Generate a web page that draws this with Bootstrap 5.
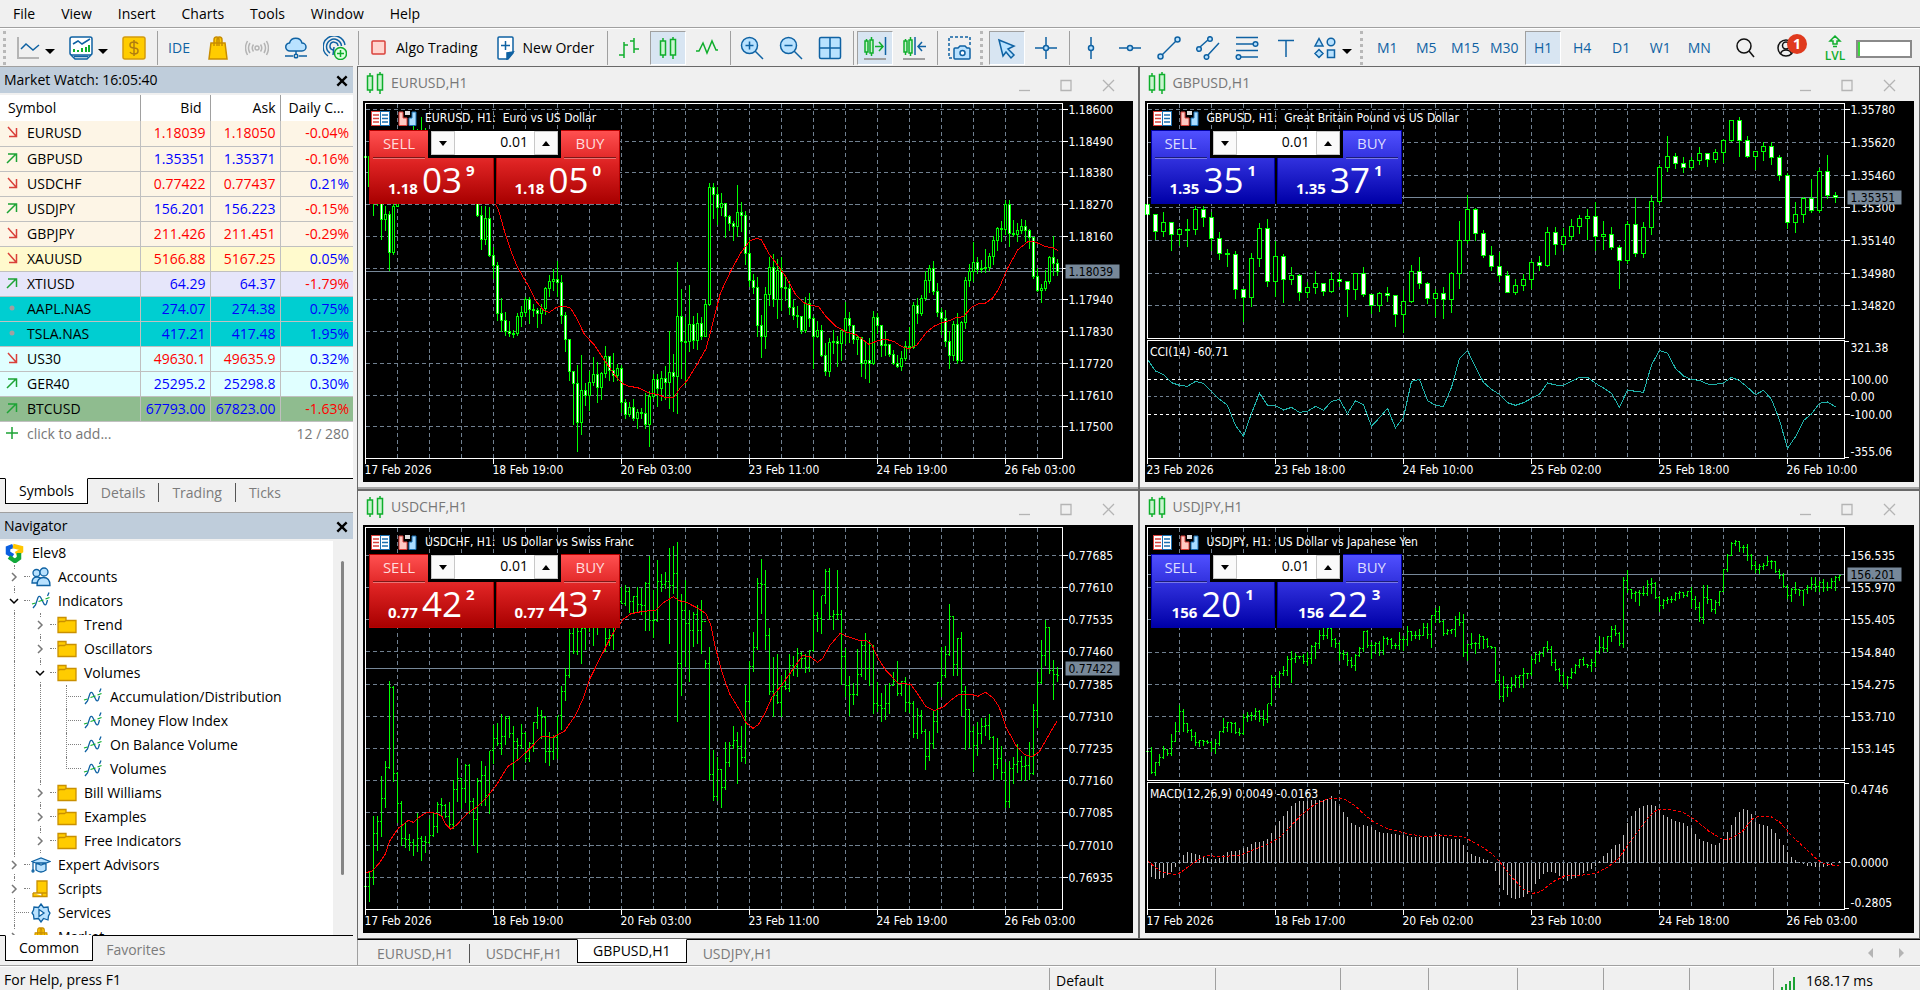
<!DOCTYPE html>
<html lang="en">
<head>
<meta charset="utf-8">
<meta name="viewport" content="width=device-width, initial-scale=1">
<title>Trading terminal</title>
<link rel="stylesheet" href="https://cdn.jsdelivr.net/npm/bootstrap@5.3.0/dist/css/bootstrap.min.css">
<style>
:root{--face:#f0f0f0;--line:#a0a0a0;--dark:#696969;--blue:#0f62a3;--green:#0fae2c}
body{font-family:"Open Sans","Noto Sans",sans-serif;font-size:14px;line-height:20px;color:#000;background:var(--face)}
a{color:inherit;text-decoration:none}
button{background:none;border:0;padding:0;color:inherit}
svg.ico{width:24px;height:24px;fill:none;stroke:var(--blue);stroke-width:1.5;flex:none}
/* menu and toolbar */
.menubar{height:28px;border-bottom:1px solid var(--line);padding-top:1px}
.menubar a{padding:0 13px}
.toolbar{height:38px;gap:3px;padding:2px 8px 0 3px;border-top:1px solid #fff}
.tool{width:36px;height:34px;display:flex;align-items:center;justify-content:center;color:var(--blue);flex:none;border:1px solid transparent}
.tool.active{background:#d8e5f2;border-color:var(--line) #fff #fff var(--line)}
.tool.drop{width:50px;justify-content:flex-start;padding-left:5px}
.tool.drop::after{content:"";border:5px solid transparent;border-top-color:#000;border-bottom:0;margin:6px 0 0 5px}
.tool.wide{width:auto;color:#000;gap:5px;padding:0 7px 0 4px}
.divide{width:3px;height:34px;flex:none;border-right:1px solid var(--line)}
.grip{width:6px;height:34px;flex:none;border-left:3px dotted #b8b8b8}
.meter{width:56px;height:18px;flex:none;border:2px solid #8a8a8a;background:#fff;border-radius:0}
.meter .progress-bar{background:#3fd63f;width:4%}
.alert-dot{top:2px;left:20px;width:20px;height:20px;line-height:20px;background:#e03a1e;color:#fff;border-radius:50%;font-weight:700}
/* docked panels */
.side{width:353px;flex:none;margin-right:4px}
.panel-head{height:27px;background:#bfcddb;border-top:1px solid var(--line);padding:0 4px;margin-bottom:2px;flex:none}
.quotes{table-layout:fixed;width:100%;background:#fff;border-collapse:collapse}
.quotes th{font-weight:400;height:26px;border-left:1px solid var(--line);padding:0 8px}
.quotes td{height:25px;border:1px solid #c0c0c0;border-width:0 0 1px 1px;padding:0 4px 0 4px;text-align:right}
.quotes th:first-child,.quotes td:first-child{border-left:0;text-align:left}
.quotes td:first-child{padding-left:6px}
.quotes td:first-child svg{width:12px;height:12px;margin-right:9px;fill:none;stroke-width:1.5;vertical-align:0}
.quotes .up{color:#00f}.quotes .dn{color:#f00}
.c-fx td{background:#fdf5e6}.c-xau td{background:#fffacd}.c-oil td{background:#e6e6fa}
.c-stk td{background:#00ced1}.c-idx td{background:#e0ffff}.c-btc td{background:#8fbc8f}
.quotes .adder td{border-color:transparent;border-left:0;color:#777}
.tabrow{display:flex;border-top:1px solid #000;padding-left:5px;height:34px;color:#7b7b7b;flex:none}
.tabrow button{padding:0 13px;height:19px;line-height:15px;margin-top:4px;border-right:1px solid #555}
.tabrow button.on{background:#fff;color:#000;height:26px;margin-top:-1px;border:1px solid #000;border-top-color:#fff;line-height:22px}
.tabrow button.last{border:0}
.tree{background:#fff;min-height:0}
.tree ul{list-style:none;margin:0;padding:0 0 0 1px;width:333px}
.tree li{height:24px;display:flex;align-items:center;line-height:24px}
.tree svg.ico{width:20px;height:20px;margin:0 7px 0 4px;stroke-width:1.3}
.cellg{width:26px;height:24px;position:relative;flex:none;display:flex;align-items:center;justify-content:center}
.cellg.v::before{content:"";position:absolute;left:13px;top:0;bottom:0;border-left:1px dotted #808080}
.cellg.half::before{bottom:12px}
.cellg.h::after{content:"";position:absolute;left:23px;top:11px;width:6px;border-top:1px dotted #808080}
.cellg.e::after{left:13px;width:15px}
.cellg svg{position:relative;background:#fff;width:10px;height:16px;fill:none;stroke:#777;stroke-width:1.5}
.track{width:20px;background:var(--face);padding:20px 9px 60px 8px}
.track div{background:#858585;border-radius:2px}
/* chart windows */
.mdi{display:grid;grid-template-columns:1fr 1fr;grid-template-rows:424fr 449fr;min-height:0}
.win{border:1px solid var(--dark);padding:0 5px 5px;display:flex;flex-direction:column;min-height:0;min-width:0}
.win:nth-child(-n+2){box-shadow:inset 0 -2px #a8a8a8;padding-bottom:7px}
.win-head{height:34px;color:#777;flex:none;padding-bottom:2px}
.win-head .ctl{gap:28px;padding-right:18px;padding-top:2px}
.win-head .ctl svg{width:14px;height:14px;fill:none;stroke:#b4b4b4;stroke-width:1.3}
.canvas{background:#000;min-height:0}
.canvas svg.plot{position:absolute;inset:0;width:100%;height:100%;font:12px "DejaVu Sans Condensed","DejaVu Sans",sans-serif;fill:#fff}
.caption{top:8px;left:8px;gap:8px;color:#fff;font:12px/18px "DejaVu Sans Condensed","DejaVu Sans",sans-serif;white-space:pre}
.caption svg{width:19px;height:15px}
.deal{top:29px;left:6px;width:251px;height:74px;gap:2px;background:#000}
.deal .side-btn{flex:1;position:relative;color:#fff;border:1px solid #b80000;background:linear-gradient(#ff5050,#d22 45%,#a80000)}
.blue .side-btn{border-color:#0000a8;background:linear-gradient(#5050ff,#2c2cd8 45%,#0000a8)}
.word{position:absolute;top:2px;left:3px;width:52px;height:25px;font-size:15px;line-height:20px;color:#ffdcdc;border-bottom:1px solid rgba(0,0,0,.45);box-shadow:0 1px rgba(255,255,255,.35)}
.blue .word{color:#dcdcff}
.buy .word{left:auto;right:3px}
.price{position:absolute;bottom:2px;left:0;right:0;height:44px;display:flex;align-items:flex-end;justify-content:center;gap:4px;padding-bottom:4px}
.price b{font-size:15px;line-height:16px;margin-bottom:1px}
.price i{font:normal 35px/34px "Open Sans","Noto Sans",sans-serif}
.price sup{font-size:15px;font-weight:700;line-height:16px;top:0;margin-bottom:19px}
.lot{top:0;left:59px;width:133px;height:28px;background:#000;padding:1px 3px 3px}
.lot button{width:24px;background:#fafafa;border:1px solid #c8c8c8;display:flex;align-items:center;justify-content:center}
.lot input{min-width:0;flex:1;border:0;text-align:right;padding:0 6px 2px;font-size:14px;color:#000;background:#fff}
.lot svg{width:8px;height:5px}
.doc-tabs{height:26px;border-left:1px solid var(--line);padding-left:3px}
.doc-tabs button{padding:0 15px 0 16px;line-height:16px}
.doc-tabs button.on{height:24px;padding:0 15px}
.status{height:25px;border-top:1px solid var(--line);box-shadow:inset 0 1px #fff;flex:none}
.status span{border-left:1px solid var(--line);padding:3px 6px 0;margin-top:2px;flex:none}
</style>
</head>
<body>
<svg width="0" height="0" class="position-absolute" aria-hidden="true">
<symbol id="i-line" viewBox="0 0 24 24"><path stroke="#b4b4b4" stroke-width="2" d="M2 1v21h21"/><path d="M5 13l5-5 7 6 6-5"/></symbol>
<symbol id="i-tpl" viewBox="0 0 24 24"><path fill="#fff" d="M3 1h18q2 0 2 2v14q0 2-2 2H3q-2 0-2-2V3q0-2 2-2z"/><path d="M4 8l5-3 4 3 8-5" /><path stroke="#0fae2c" stroke-width="2" stroke-dasharray="none" d="M5 16v-3M9 16v-2M13 16v-4M17 16v-5M20 16v-7"/><path d="M2 19l4 4h12l4-4M5 20.500h14"/></symbol>
<symbol id="i-usd" viewBox="0 0 24 24"><rect x="1" y="1" width="22" height="22" rx="2" fill="#ffcc00" stroke="#d39b0c"/><path stroke="#b07c10" d="M16 8q-1-2-4-2-4 0-4 3t4 3 4 3-4 3q-3 0-4-2M12 4v16"/></symbol>
<symbol id="i-bag" viewBox="0 0 24 24"><path fill="#ffcc00" stroke="#c98d00" d="M5 7h14l2 16H3zM8 10V4q0-3 2.500-3T13 4v6M11 10V4q0-3 2.500-3T16 4v6"/></symbol>
<symbol id="i-sig" viewBox="0 0 24 24"><g stroke="#b4b4b4"><circle cx="12" cy="12" r="2"/><path d="M8.500 8.500q-2.500 3.500 0 7M15.500 8.500q2.500 3.500 0 7M5 7q-3 5 0 10M19 7q3 5 0 10M2.500 5q-4 7 0 14M21.500 5q4 7 0 14"/></g></symbol>
<symbol id="i-cloud" viewBox="0 0 24 24"><path fill="#b9e2ff" d="M6 15a4 4 0 0 1-.5-8A6.500 6.500 0 0 1 18 7a4 4 0 0 1 0 8z"/><path d="M12 15v4M1 20h8M15 20h8"/><circle cx="12" cy="20" r="1.800"/></symbol>
<symbol id="i-vps" viewBox="0 0 24 24"><path d="M5 20A11 11 0 1 1 22 9M7 17A7.500 7.500 0 1 1 18.500 10M10 14a4 4 0 1 1 5-4M11 11l-1 8"/><circle cx="17.500" cy="17.500" r="6" fill="#dfffe0" stroke="#0fae2c"/><path stroke="#0fae2c" d="M17.500 14v7M14 17.500h7"/></symbol>
<symbol id="i-algo" viewBox="0 0 24 24"><rect x="5" y="5" width="13" height="13" rx="1" fill="#ffd6d0" stroke="#d9403a"/></symbol>
<symbol id="i-order" viewBox="0 0 24 24"><path fill="#fff" d="M5 1h13q1 0 1 1v15l-5 6H5q-1 0-1-1V2q0-1 1-1z"/><path fill="#0f62a3" d="M19 16l-6 7v-6z"/><path d="M11.500 5v9M7 9.500h9"/></symbol>
<symbol id="i-bars" viewBox="0 0 24 24"><path stroke="#0fae2c" d="M7 6v16M2 19h5M7 9h4M17 2v15M13 5h4M17 13h5"/></symbol>
<symbol id="i-candle" viewBox="0 0 24 24"><path stroke="#0fae2c" d="M7 2v3M7 19v3M17 1v2M17 19v4"/><path stroke="#0fae2c" fill="#c9f5cf" d="M4.500 5h5v14h-5zM14.500 3.500h5v15.500h-5z"/></symbol>
<symbol id="i-zig" viewBox="0 0 24 24"><path stroke="#0fae2c" d="M1 15h3l4-8 4 10 5-12 4 9h2"/></symbol>
<symbol id="i-zin" viewBox="0 0 24 24"><circle cx="9.500" cy="9.500" r="8" fill="#b9e2ff"/><path d="M15 15l8 8M9.500 5.500v8M5.500 9.500h8"/></symbol>
<symbol id="i-zout" viewBox="0 0 24 24"><circle cx="9.500" cy="9.500" r="8" fill="#b9e2ff"/><path d="M15 15l8 8M5.500 9.500h8"/></symbol>
<symbol id="i-tile" viewBox="0 0 24 24"><path fill="#b9e2ff" d="M3 1.500h18q1.500 0 1.500 1.500v18q0 1.500-1.500 1.500H3q-1.500 0-1.500-1.500V3q0-1.500 1.500-1.500zM12 1.500v21M1.500 12h21"/></symbol>
<symbol id="i-scroll" viewBox="0 0 24 24"><path stroke="#0fae2c" fill="#c9f5cf" d="M2 5h3v11H2zM7 4h3v13H7zM3.500 3v2M3.500 16v3M8.500 1v3M8.500 17v3"/><path stroke="#0fae2c" d="M12 10.500h8M16 6l4 4.500-4 4.500"/><path d="M22.500 1v18"/><path stroke="#a0a0a0" stroke-width="2" d="M1 23h22"/></symbol>
<symbol id="i-shift" viewBox="0 0 24 24"><path stroke="#0fae2c" fill="#c9f5cf" d="M2 5h3v11H2zM7 4h3v13H7zM3.500 3v2M3.500 16v3M8.500 1v3M8.500 17v3"/><path d="M13 1v18M24 10.500h-8M20 6l-4 4.500 4 4.500"/><path stroke="#a0a0a0" stroke-width="2" d="M1 23h22"/></symbol>
<symbol id="i-cam" viewBox="0 0 24 24"><path stroke-dasharray="3 2" d="M5 22H2V1h21v8"/><path fill="#b9e2ff" d="M8 12h3l2-2h5l2 2h2q1 0 1 1v9q0 1-1 1H8q-1 0-1-1v-9q0-1 1-1z"/><circle cx="15.500" cy="17" r="2.500" fill="#fff"/></symbol>
<symbol id="i-cur" viewBox="0 0 24 24"><path fill="#b9e2ff" d="M4 4l15 6-6 3 6 6-3 3-5-6-3 4z"/></symbol>
<symbol id="i-cross" viewBox="0 0 24 24"><path d="M12 1v8M12 15v8M1 12h8M15 12h8"/><circle cx="12" cy="12" r="2.500" fill="#b9e2ff"/></symbol>
<symbol id="i-vl" viewBox="0 0 24 24"><path d="M12 1v8M12 15v8"/><circle cx="12" cy="12" r="2.500" fill="#b9e2ff"/></symbol>
<symbol id="i-hl" viewBox="0 0 24 24"><path d="M1 12h8M15 12h8"/><circle cx="12" cy="12" r="2.500" fill="#b9e2ff"/></symbol>
<symbol id="i-trend" viewBox="0 0 24 24"><path d="M5 19L19 5"/><circle cx="3.500" cy="20.500" r="2.500" fill="#b9e2ff"/><circle cx="20.500" cy="3.500" r="2.500" fill="#b9e2ff"/></symbol>
<symbol id="i-chan" viewBox="0 0 24 24"><path d="M4 11l9-8M12 19L23 7"/><g fill="#b9e2ff"><circle cx="14" cy="3" r="2.300"/><circle cx="3" cy="13" r="2.300"/><circle cx="10.500" cy="21" r="2.300"/></g></symbol>
<symbol id="i-fib" viewBox="0 0 24 24"><path d="M1 1.500h22M1 8h17M1 14.500h22M6 21h17"/><g fill="#b9e2ff"><circle cx="20.500" cy="8" r="2.300"/><circle cx="3.500" cy="21" r="2.300"/></g></symbol>
<symbol id="i-text" viewBox="0 0 24 24"><path d="M4 4.500h16M12 4.500V21"/></symbol>
<symbol id="i-shapes" viewBox="0 0 24 24"><g fill="#b9e2ff"><path d="M6 2.500l4 7.500H2zM6 13.500l4 4-4 4-4-4zM14.500 14h7v7.500h-7z"/><circle cx="18" cy="6" r="3.800"/></g></symbol>
<symbol id="i-find" viewBox="0 0 24 24"><g stroke="#111"><circle cx="11" cy="10" r="7"/><path d="M16 15l5 6"/></g></symbol>
<symbol id="i-user" viewBox="0 0 24 24"><g stroke="#111"><circle cx="12" cy="12" r="8"/><circle cx="12" cy="9.500" r="3.500"/><path d="M6.500 18q1-4 5.500-4t5.500 4"/></g></symbol>
<symbol id="i-lvl" viewBox="0 0 24 16"><path stroke="#0fae2c" d="M12 2l5 5h-3v3h-4V7H7zM10 12.500h4"/></symbol>
<symbol id="i-up" viewBox="0 0 12 12"><path stroke="#1da335" d="M1 11L10 2M2 2h8.500v8"/></symbol>
<symbol id="i-dn" viewBox="0 0 12 12"><path stroke="#d9403a" d="M2 1l8 9M10.500 2v8.500H3"/></symbol>
<symbol id="i-dot" viewBox="0 0 12 12"><circle cx="6" cy="6" r="2.500" fill="#a0a0a0"/></symbol>
<symbol id="i-plus" viewBox="0 0 12 12"><path stroke="#1da335" d="M6 0v12M0 6h12"/></symbol>
<symbol id="i-x" viewBox="0 0 12 12"><path stroke="#000" stroke-width="2" d="M2 2l8 8M10 2l-8 8"/></symbol>
<symbol id="i-r" viewBox="0 0 10 16"><path d="M3 4l4 4-4 4"/></symbol>
<symbol id="i-d" viewBox="0 0 10 16"><path stroke="#000" d="M1 6l4 4 4-4"/></symbol>
<symbol id="i-fold" viewBox="0 0 20 20"><path fill="#ffcc00" stroke="#c99000" d="M1 2.500h8v3h10v12H1zM1 8l1.500-1.500h5L9 5.500"/></symbol>
<symbol id="i-fx" viewBox="0 0 20 20"><path d="M2 17l2.500-3 2.500-7.500Q8.500 4 10 7l3 6q1.500 2 2.500-.5l1-3.500M16.500 5l1.500-3.500"/><path stroke="#0fae2c" d="M1 13l3.500-1M7.500 10.500l5-1.500M14.500 8l4-1.500"/></symbol>
<symbol id="i-acc" viewBox="0 0 20 20"><g fill="#b9e2ff"><circle cx="5.500" cy="6" r="3.500"/><path d="M1 16q0-6 5-6t5 6z"/><circle cx="13" cy="5" r="4"/><path d="M6 18.500q0-8 6.500-8t6.500 8z"/></g></symbol>
<symbol id="i-exp" viewBox="0 0 20 20"><path fill="#b9e2ff" d="M5 8v7q5 4 10 0V8zM1 6.500L10 3l9 3.500L10 10zM2 7v8"/><circle cx="2" cy="16" r="1"/></symbol>
<symbol id="i-scr" viewBox="0 0 20 20"><path fill="#ffcc00" stroke="#c99000" d="M6 2h10v12H6zM2 14h9v3.500h5V14M2 14v3.500h11"/></symbol>
<symbol id="i-srv" viewBox="0 0 20 20"><path fill="#b9e2ff" d="M10 1l2.500 3.500L17 4l.5 4L19 10l-1.500 3-.5 4-4.500-1.500L10 19l-2.500-3.500L3 16l-.5-4L1 10l1.500-3L3 4l4.500.5z"/><path d="M8 6.500l5 3.500-5 3.500z" fill="#fff"/></symbol>
<symbol id="i-logo" viewBox="0 0 20 20"><g stroke-width="4.500"><path stroke="#0a5fe0" d="M8 3L3 5v5l5 3"/><path stroke="#ffc600" d="M8 3l8 2v3l-5 3"/><path stroke="#12a83a" d="M4 14l6 4 4-3v-5"/></g></symbol>
<symbol id="i-dom" viewBox="0 0 19 15"><rect x=".5" y=".5" width="9" height="14" fill="#fff" stroke="#d9403a"/><rect x="9.500" y=".5" width="9" height="14" fill="#fff" stroke="#1a6fb0"/><path stroke="#d9403a" stroke-width="1.500" d="M2 4h6M2 7.500h6M2 11h6"/><path stroke="#1a6fb0" stroke-width="1.500" d="M11 4h6M11 7.500h6M11 11h6"/></symbol>
<symbol id="i-one" viewBox="0 0 19 15"><path fill="#ffc9c2" stroke="#d9403a" d="M1 1h4v6h4v7.500H1z"/><path fill="#a9dcff" stroke="#1a6fb0" d="M18 1h-4v6h-3v7.500h7z"/><path fill="#ddd" d="M7 0h5v4H7z"/></symbol>
</svg>

<div class="vh-100 d-flex flex-column overflow-hidden">
<nav class="menubar d-flex align-items-center flex-shrink-0" aria-label="Main menu">
<a href="#">File</a><a href="#">View</a><a href="#">Insert</a><a href="#">Charts</a><a href="#">Tools</a><a href="#">Window</a><a href="#">Help</a>
</nav>
<div class="toolbar d-flex flex-shrink-0" id="toolbar" role="toolbar" aria-label="Toolbar"></div>

<div class="d-flex flex-grow-1" style="min-height:0">
<aside class="side d-flex flex-column">
<section>
<div class="panel-head d-flex justify-content-between align-items-center"><span>Market Watch: 16:05:40</span><button aria-label="Close Market Watch"><svg width="14" height="14"><use href="#i-x"/></svg></button></div>
<div class="bg-white">
<table class="quotes mb-0"><colgroup><col style="width:140px"><col style="width:70px"><col style="width:70px"><col></colgroup>
<thead><tr><th>Symbol</th><th class="text-end">Bid</th><th class="text-end px-1">Ask</th><th>Daily C...</th></tr></thead><tbody id="quotes"></tbody></table>
<div style="height:31px"></div></div>
<div class="tabrow"><button class="on">Symbols</button><button>Details</button><button>Trading</button><button class="last">Ticks</button></div>
</section>
<section class="d-flex flex-column flex-grow-1" style="min-height:0">
<div class="panel-head d-flex justify-content-between align-items-center"><span>Navigator</span><button aria-label="Close Navigator"><svg width="14" height="14"><use href="#i-x"/></svg></button></div>
<div class="tree d-flex flex-grow-1 overflow-hidden"><ul id="tree" class="flex-grow-1"></ul><div class="track flex-shrink-0 d-flex"><div class="flex-grow-1"></div></div></div>
<div class="tabrow" style="height:30px"><button class="on">Common</button><button class="last">Favorites</button></div>
</section>
</aside>
<main class="flex-grow-1 d-flex flex-column" style="min-width:0">
<div class="mdi flex-grow-1" id="mdi"></div>
<div class="tabrow doc-tabs"><button>EURUSD,H1</button><button class="last">USDCHF,H1</button><button class="on">GBPUSD,H1</button><button class="last">USDJPY,H1</button>
<span class="ms-auto d-flex align-items-center gap-4 pe-3"><svg width="6" height="10"><path fill="#b4b4b4" d="M5 0v10L0 5z"/></svg><svg width="6" height="10"><path fill="#b4b4b4" d="M1 0v10l5-5z"/></svg></span></div>
</main>
</div>
<footer class="status d-flex">
<div class="flex-grow-1 ps-1 pt-1">For Help, press F1</div>
<span style="width:166px">Default</span><span style="width:125px"></span><span style="width:88px"></span><span style="width:89px"></span><span style="width:86px"></span><span style="width:86px"></span><span style="width:84px"></span>
<span style="width:147px" class="d-flex gap-2"><svg width="18" height="16" class="mt-1"><path stroke="#1da335" stroke-width="2" d="M2 15v-3M6 15v-6M10 15V6M14 15V2"/></svg>168.17 ms</span>
</footer>
</div>

<script>
const ico=(n,c='ico')=>`<svg class="${c}" aria-hidden="true"><use href="#i-${n}"/></svg>`;
const T=(n,l,c='')=>`<button class="tool ${c}" aria-label="${l}">${ico(n)}</button>`;
const P=(t,c='')=>`<button class="tool ${c}">${t}</button>`;
const S='<span class="divide"></span>',G='<span class="grip"></span>';
document.getElementById('toolbar').innerHTML=
 '<span class="grip" style="margin-right:-2px"></span>'+T('line','Line studies','drop')+T('tpl','Templates','drop')+T('usd','Symbols')+S+P('IDE')+T('bag','Market')+T('sig','Signals')+T('cloud','VPS')+T('vps','Hosting')+S+
 `<button class="tool wide">${ico('algo')}Algo Trading</button><button class="tool wide">${ico('order')}New Order</button>`+S+
 T('bars','Bar chart')+T('candle','Candlesticks','active')+T('zig','Line chart')+S+T('zin','Zoom in')+T('zout','Zoom out')+T('tile','Tile windows')+S+
 T('scroll','Auto scroll','active')+T('shift','Chart shift')+S+T('cam','Screenshot')+G+T('cur','Cursor','active')+T('cross','Crosshair')+S+
 T('vl','Vertical line')+T('hl','Horizontal line')+T('trend','Trendline')+T('chan','Channel')+T('fib','Fibonacci')+T('text','Text')+T('shapes','Shapes','drop')+G+
 ['M1','M5','M15','M30','H1','H4','D1','W1','MN'].map(t=>P(t,t=='H1'?'active':'')).join('')+
 '<span class="ms-auto"></span>'+T('find','Search')+
 `<button class="tool position-relative" style="width:40px" aria-label="Account">${ico('user')}<span class="alert-dot position-absolute">1</span></button>`+
 `<button class="tool flex-column ms-2" style="color:var(--green);font-size:12px;line-height:12px;font-weight:600"><svg class="ico" style="height:16px"><use href="#i-lvl"/></svg>LVL</button>`+
 '<div class="progress meter align-self-center"><div class="progress-bar"></div></div>';

/* symbol, direction, bid, ask, change, row colour */
const Q=`EURUSD dn 1.18039 1.18050 -0.04% fx
GBPUSD up 1.35351 1.35371 -0.16% fx
USDCHF dn 0.77422 0.77437 0.21% fx
USDJPY up 156.201 156.223 -0.15% fx
GBPJPY dn 211.426 211.451 -0.29% fx
XAUUSD dn 5166.88 5167.25 0.05% xau
XTIUSD up 64.29 64.37 -1.79% oil
AAPL.NAS dot 274.07 274.38 0.75% stk
TSLA.NAS dot 417.21 417.48 1.95% stk
US30 dn 49630.1 49635.9 0.32% idx
GER40 up 25295.2 25298.8 0.30% idx
BTCUSD up 67793.00 67823.00 -1.63% btc`.split('\n').map(r=>r.split(' '));
document.getElementById('quotes').innerHTML=Q.map(([s,d,b,a,p,c])=>{const k=d=='dn'?'dn':'up';
 return `<tr class="c-${c}"><td>${ico(d,'')}${s}</td><td class="${k}">${b}</td><td class="${k}">${a}</td><td class="${p[0]=='-'?'dn':'up'}">${p}</td></tr>`}).join('')+
 `<tr class="adder"><td>${ico('plus','')}click to add...</td><td colspan="3">12 / 280</td></tr>`;

/* guide cells per row: g = guide, r/d = closed/open node, e = leaf, E = last leaf */
const N=[['','logo','Elev8'],['r','acc','Accounts'],['d','fx','Indicators'],['gr','fold','Trend'],['gr','fold','Oscillators'],['gd','fold','Volumes'],
['gge','fx','Accumulation/Distribution'],['gge','fx','Money Flow Index'],['gge','fx','On Balance Volume'],['ggE','fx','Volumes'],['gr','fold','Bill Williams'],['gr','fold','Examples'],['gr','fold','Free Indicators'],
['r','exp','Expert Advisors'],['r','scr','Scripts'],['e','srv','Services'],['r','bag','Market']];
document.getElementById('tree').innerHTML=N.map(([g,i,t])=>'<li>'+[...g].map(c=>
 c=='g'?'<span class="cellg v"></span>':c=='r'||c=='d'?`<span class="cellg v h">${ico(c,'')}</span>`:`<span class="cellg v h e ${c=='E'?'half':''}"></span>`).join('')+ico(i)+t+'</li>').join('');

/* bars: "high low close" on the chart's vertical scale */
const EUR=`262 315 290,290 420 380,350 465 420,380 435 420,400 537 478,436 512 462,450 630 578,430 582 440,300 440 350,250 430 300,240 380 300,230 380 280,192 300 260,205 300 240,170 300 230,203 300 250,230 320 270,240 330 280,240 340 300,260 340 290,260 350 310,270 360 300,280 370 320,290 380 340,300 400 350,320 410 380,340 420 390,360 430 400,380 468 466,435 567 538,437 552 474,440 590 586,560 655 616,604 780 760,712 815 782,754 825 813,782 828 820,808 832 821,758 825 768,735 800 757,708 770 718,708 790 748,730 768 750,742 803 760,730 790 745,678 762 686,642 710 664,625 692 658,600 710 668,642 790 765,754 875 838,838 960 935,930 1092 970,912 1173 1086,882 1122 991,966 1036 1006,930 1052 966,890 975 943,905 1026 983,935 1018 940,856 952 888,890 960 930,878 965 945,910 960 925,912 1058 1026,1016 1076 1063,1025 1070 1042,1015 1082 1076,1044 1104 1057,1042 1076 1060,996 1105 1093,990 1160 1010,940 1015 958,940 1040 985,932 1022 955,915 1018 967,812 1045 936,880 1055 950,603 1060 770,684 956 845,768 972 845,674 875 793,766 866 840,758 868 790,768 838 830,718 740 734,368 736 382,368 474 402,380 492 442,398 466 430,428 532 468,462 510 490,482 542 499,374 528 457,425 515 466,452 612 580,532 680 662,640 700 682,650 830 795,762 893 830,680 864 702,590 736 622,580 740 718,596 774 630,590 752 682,650 720 685,660 764 742,718 778 766,735 802 768,790 820 812,708 818 730,698 800 775,765 926 830,782 832 812,792 888 885,846 946 934,832 948 846,808 880 844,825 918 850,810 901 812,724 850 776,754 848 797,792 850 838,824 884 832,828 950 910,840 954 900,832 966 910,752 912 772,756 820 797,792 888 855,812 886 852,850 888 884,868 912 910,882 922 920,870 930 895,842 902 860,798 868 862,724 865 735,712 790 760,704 765 716,632 722 660,614 698 625,600 702 694,668 768 758,742 822 775,748 860 843,812 924 886,780 902 792,756 910 901,780 905 788,648 804 660,610 680 635,545 665 606,590 640 628,598 636 625,564 636 622,578 630 588,526 614 540,500 570 506,480 545 508,418 522 433,418 558 520,478 530 524,486 545 512,474 520 498,478 545 512,505 565 532,528 655 650,622 694 692,670 728 686,628 690 665,586 670 592,526 645 610,596 645 634`;
const GBP=`432 465 462,460 537 514,453 530 486,484 570 524,502 555 508,474 558 508,436 524 447,436 500 472,455 570 535,515 597 580,565 618 583,570 715 688,686 784 712,576 738 595,486 620 505,476 680 664,542 710 589,580 726 657,620 672 646,640 722 697,665 712 682,630 700 670,678 705 693,633 696 657,635 680 664,662 768 688,638 718 640,620 708 703,700 760 736,694 755 700,678 725 706,704 798 763,688 816 724,612 726 634,590 685 670,664 730 714,686 768 700,680 776 718,634 756 640,480 686 541,403 550 447,442 542 520,508 592 586,555 632 619,574 664 646,632 698 697,656 702 676,640 690 657,598 684 607,586 630 616,498 618 517,500 582 553,502 570 529,476 538 499,464 520 475,446 537 469,424 572 529,480 568 523,500 568 562,552 686 601,482 610 493,412 590 580,484 592 502,403 524 424,312 430 322,225 335 290,276 325 310,288 338 322,290 328 301,258 314 281,280 320 299,264 306 277,236 306 241,178 244 181,168 290 241,226 292 289,270 328 273,245 300 259,245 312 293,282 360 346,338 505 487,424 516 463,408 488 415,354 456 452,322 458 334,282 415 406,394 426 411`;
const CHF=`1203 1205 1203,1158 1248 1176,992 1197 1044,992 1095 1010,870 1055 940,825 968 848,585 850 606,602 890 866,858 1012 955,945 1082 1060,1008 1088 1062,1045 1095 1072,1060 1110 1080,982 1098 1060,1050 1125 1068,1050 1103 1072,1000 1075 1050,982 1055 1024,948 1042 957,936 990 960,955 998 994,950 1026 1018,882 1030 912,816 950 880,880 970 910,834 952 842,834 985 950,936 1082 1003,878 1102 888,825 962 870,842 962 930,795 985 797,718 835 760,712 782 776,684 808 755,692 778 700,690 758 745,720 884 770,756 822 780,715 790 745,740 828 820,770 830 776,708 798 712,664 730 690,672 760 698,692 832 800,740 840 798,748 824 756,690 820 692,600 732 620,546 645 572,430 578 445,380 505 500,400 508 440,380 536 430,380 492 400,380 440 410,390 482 420,370 448 400,350 425 400,380 500 460,430 482 452,400 492 420,330 425 350,304 356 355,297 362 320,305 382 350,330 385 335,303 378 357,308 388 360,290 435 295,212 435 405,312 456 405,222 410 290,265 320 297,260 310 290,188 474 300,180 325 265,168 708 535,326 632 375,282 543 415,372 590 436,378 485 388,358 474 435,342 504 410,524 550 535,483 884 868,792 945 935,814 945 852,850 966 906,770 912 832,770 845 782,722 790 766,738 894 785,720 830 817,597 834 650,525 672 545,440 560 487,276 492 295,219 385 297,252 492 452,428 628 620,514 695 630,506 656 652,570 694 605,554 614 610,504 620 540,510 570 545,488 574 505,500 550 520,505 562 548,492 560 495,312 500 390,380 438 400,330 444 330,250 355 258,248 402 395,372 432 388,252 402 388,374 598 515,486 633 600,572 692 628,592 658 628,490 630 568,462 573 480,442 584 550,462 600 480,480 686 655,590 680 662,622 708 670,598 702 655,592 686 600,558 600 590,525 630 625,586 632 590,574 678 652,596 682 656,646 756 745,666 760 690,672 745 740,730 852 815,735 826 775,676 790 710,588 742 592,484 634 572,480 576 508,354 510 395,390 570 538,456 572 460,440 690 620,602 792 672,670 786 740,720 860 780,708 810 745,698 775 725,698 752 722,684 762 758,750 882 838,756 850 820,780 884 862,828 966 948,825 966 850,814 895 838,774 862 830,812 886 845,812 886 840,770 884 865,655 868 675,558 728 592,462 594 510,402 540 428,428 566 555,522 642 568,544 588 572`;
const JPY=`780 805 800,783 865 862,828 870 832,805 842 818,782 820 792,792 812 806,745 812 768,708 770 738,658 740 680,670 740 716,712 742 736,730 765 754,740 780 772,762 785 766,762 780 770,764 776 772,765 800 790,760 806 776,736 780 738,696 742 726,708 738 712,708 742 714,710 745 742,726 750 745,684 748 698,680 710 692,680 706 692,668 704 680,674 708 700,674 722 702,654 712 655,568 662 578,570 606 598,555 606 566,540 572 555,510 572 522,496 592 520,502 532 514,510 520 514,505 535 530,500 540 520,478 534 484,470 520 475,432 490 450,425 462 452,420 460 430,425 484 464,458 488 475,470 525 506,492 524 508,500 540 526,515 548 540,505 555 510,485 515 490,435 500 440,432 488 480,468 520 482,470 504 474,466 512 496,450 508 460,454 478 462,456 490 480,472 490 482,440 492 462,450 496 462,420 482 440,438 466 450,436 460 450,430 462 450,412 452 426,412 460 448,388 486 392,368 412 378,362 412 408,404 450 445,430 448 436,430 446 434,390 455 402,380 420 412,384 515 502,474 526 478,442 490 474,470 504 475,444 490 454,452 490 464,458 488 485,482 490 487,486 592 586,564 640 635,572 648 606,598 634 608,574 620 602,568 608 576,568 608 572,548 608 565,562 580 566,512 572 522,500 534 508,496 530 506,484 514 488,465 500 492,482 540 532,520 556 552,548 588 572,560 604 598,572 610 576,546 580 562,536 566 542,520 548 524,514 540 538,536 548 542,520 558 532,494 545 498,450 504 486,454 498 490,450 500 454,420 468 432,418 450 444,440 480 476,275 488 285,252 322 312,310 340 324,315 350 322,314 360 324,300 332 324,282 330 298,278 326 294,290 340 336,330 380 360,340 370 345,335 355 344,332 352 342,320 345 324,315 340 322,318 338 330,316 335 318,305 368 342,332 372 366,350 408 398,298 416 336,298 354 344,340 378 374,342 386 352,316 360 318,250 320 254,205 260 210,170 212 174,162 182 170,168 200 186,178 202 188,174 226 212,205 252 240,225 262 252,235 266 244,232 252 240,210 240 230,222 250 230,230 262 260,250 280 272,262 308 304,298 340 332,308 348 314,290 325 314,310 330 316,312 360 314,298 325 306,274 312 298,274 320 304,285 318 292,280 318 308,290 315 308,278 310 290,272 316 278,268 285 270`;
const EURMA='276,425 285,450 298,520 310,575 322,620 345,680 360,725 375,752 386,757 400,742 415,738 428,745 440,775 455,822 475,855 495,900 515,945 530,970 545,980 560,982 585,1000 600,1003 615,1012 633,1012 645,985 660,960 680,910 697,865 710,790 725,700 745,635 765,580 783,543 797,535 807,540 820,578 835,608 855,650 875,705 890,728 905,736 920,740 935,770 955,800 975,816 995,825 1020,853 1037,842 1052,837 1070,845 1085,860 1100,867 1115,855 1135,815 1150,798 1165,788 1180,782 1190,774 1207,770 1225,740 1237,732 1250,730 1265,715 1278,685 1295,625 1315,570 1335,545 1350,546 1370,560 1385,563 1395,572';
const CHFMA='23,1162 35,1160 50,1135 62,1108 72,1065 88,1030 108,1006 118,1012 130,996 145,982 165,985 175,995 182,1018 192,1033 205,1018 225,985 245,965 265,935 285,895 305,845 325,825 350,790 372,754 395,757 418,738 440,690 455,640 467,585 485,530 505,470 520,430 535,402 550,386 570,380 600,375 612,355 634,335 645,347 660,352 680,368 698,385 708,420 716,480 730,560 745,625 765,675 777,712 792,730 803,718 817,680 830,635 850,598 870,555 890,512 905,515 920,532 930,520 945,480 965,445 980,455 1000,465 1015,465 1027,478 1040,520 1055,555 1080,595 1105,598 1120,630 1135,665 1152,677 1170,665 1185,645 1200,628 1225,628 1238,634 1253,622 1268,638 1280,665 1295,730 1315,785 1330,808 1345,816 1360,800 1375,760 1395,708';
const CCI=[898,933,944,968,976,979,964,970,994,1018,1036,1096,1128,1060,1000,1036,1037,1050,1042,1057,1054,1039,1051,1024,1018,1061,1022,1034,1099,1073,1045,1104,1072,964,958,1022,1036,1040,982,895,871,922,967,988,1003,1028,1036,1028,1015,1003,969,975,976,964,952,952,970,984,1000,1042,990,994,997,915,871,880,925,948,959,961,972,973,969,952,962,982,1004,991,1018,1080,1165,1130,1082,1062,1030,1026,1040];
const HIST='43,1175 55,1182 70,1175 82,1160 90,1145 95,1132 102,1115 114,1098 130,1106 150,1114 165,1122 178,1118 190,1102 205,1095 217,1095 235,1082 250,1068 265,1068 275,1058 290,1020 305,992 320,962 336,945 360,945 390,944 400,930 410,950 425,980 440,1012 455,1026 465,1017 480,1026 495,1040 530,1046 560,1055 595,1055 608,1040 620,1052 640,1060 655,1062 670,1098 685,1112 700,1118 715,1128 722,1134 733,1198 750,1230 765,1242 780,1236 795,1220 810,1185 825,1158 840,1158 860,1180 870,1186 885,1176 900,1162 915,1152 925,1140 935,1120 948,1102 965,1076 975,1076 985,1020 1000,982 1015,965 1030,957 1045,962 1060,990 1080,1004 1100,1014 1115,1028 1130,1060 1150,1072 1162,1080 1175,1068 1190,1030 1205,985 1220,970 1230,975 1242,1010 1265,1022 1280,1038 1295,1072 1310,1110 1325,1128 1345,1142 1375,1144 1392,1138 1408,1128';
const SIGNAL='35,1126 45,1140 60,1158 75,1166 95,1168 110,1152 130,1130 150,1112 180,1114 215,1112 245,1095 270,1080 295,1060 315,1030 340,990 365,960 385,946 400,940 425,942 445,960 465,988 485,1012 510,1030 550,1046 580,1054 620,1052 660,1054 680,1070 700,1087 720,1108 740,1142 760,1180 780,1212 800,1225 815,1220 840,1190 865,1171 895,1171 925,1165 950,1145 970,1120 990,1075 1010,1035 1030,995 1045,975 1065,972 1095,980 1120,1003 1150,1040 1175,1062 1190,1062 1215,1040 1235,1002 1250,993 1270,993 1290,1012 1315,1055 1340,1090 1365,1125 1380,1138 1408,1142';

const wins=[
{s:'EURUSD',name:'Euro vs US Dollar',sell:['1.18','03','9'],buy:['1.18','05','0'],y0:123,x0:21,step:4,kind:'candle',data:EUR,ma:EURMA,
 grid:[[148,'1.18600'],[244,'1.18490'],[337,'1.18380'],[433,'1.18270'],[529,'1.18160'],[625,''],[718,'1.17940'],[814,'1.17830'],[910,'1.17720'],[1006,'1.17610'],[1099,'1.17500']],price:[634,'1.18039'],
 dates:['17 Feb 2026','18 Feb 19:00','20 Feb 03:00','23 Feb 11:00','24 Feb 19:00','26 Feb 03:00']},
{s:'GBPUSD',name:'Great Britain Pound vs US Dollar',blue:1,sell:['1.35','35','1'],buy:['1.35','37','1'],y0:123,x0:33,step:8,kind:'candle',data:GBP,split:[834,842],
 grid:[[148,'1.35780'],[247,'1.35620'],[346,'1.35460'],[442,'1.35300'],[541,'1.35140'],[640,'1.34980'],[736,'1.34820']],price:[412,'1.35351'],
 lower:[[958,'100.00','#fff'],[1009,'0.00','#708090'],[1063,'-100.00','#fff']],ends:[[862,'321.38'],[1175,'-355.06']],note:'CCI(14) -60.71',
 dates:['23 Feb 2026','23 Feb 18:00','24 Feb 10:00','25 Feb 02:00','25 Feb 18:00','26 Feb 10:00']},
{s:'USDCHF',name:'US Dollar vs Swiss Franc',sell:['0.77','42','2'],buy:['0.77','43','7'],y0:120,x0:23,step:4,kind:'bar',data:CHF,ma:CHFMA,
 grid:[[211,'0.77685'],[307,'0.77610'],[403,'0.77535'],[499,'0.77460'],[598,'0.77385'],[694,'0.77310'],[790,'0.77235'],[886,'0.77160'],[982,'0.77085'],[1081,'0.77010'],[1177,'0.76935']],price:[550,'0.77422'],
 dates:['17 Feb 2026','18 Feb 19:00','20 Feb 03:00','23 Feb 11:00','24 Feb 19:00','26 Feb 03:00']},
{s:'USDJPY',name:'US Dollar vs Japanese Yen',blue:1,sell:['156','20','1'],buy:['156','22','3'],y0:120,x0:35,step:4,kind:'bar',data:JPY,split:[886,893],
 grid:[[211,'156.535'],[307,'155.970'],[403,'155.405'],[502,'154.840'],[598,'154.275'],[694,'153.710'],[790,'153.145']],price:[268,'156.201'],
 lower:[[1132,'0.0000','#708090']],ends:[[913,'0.4746'],[1252,'-0.2805']],note:'MACD(12,26,9) 0.0049 -0.0163',
 dates:['17 Feb 2026','18 Feb 17:00','20 Feb 02:00','23 Feb 10:00','24 Feb 18:00','26 Feb 03:00']}];

const quote=(a)=>`<span class="price"><b>${a[0]}</b><i>${a[1]}</i><sup>${a[2]}</sup></span>`;
document.getElementById('mdi').innerHTML=wins.map((w,i)=>`<section class="win" aria-label="${w.s} chart">
<header class="win-head d-flex align-items-center">${ico('candle')}<span class="ms-1">${w.s},H1</span>
<span class="ctl ms-auto d-flex"><button aria-label="Minimize"><svg><path d="M2 12.500h11"/></svg></button><button aria-label="Maximize"><svg><path d="M2 2.500h10v10H2z"/></svg></button><button aria-label="Close"><svg><path d="M2 2l11 11M13 2L2 13"/></svg></button></span></header>
<div class="canvas position-relative flex-grow-1 overflow-hidden"><svg class="plot" id="plot${i}"></svg>
<div class="caption position-absolute d-flex align-items-center">${ico('dom','')}${ico('one','')}<span>${w.s}, H1:  ${w.name}</span></div>
<div class="deal position-absolute d-flex ${w.blue?'blue':''}"><button class="side-btn"><span class="word">SELL</span>${quote(w.sell)}</button><button class="side-btn buy"><span class="word">BUY</span>${quote(w.buy)}</button>
<div class="lot position-absolute d-flex"><button aria-label="Decrease volume"><svg><path fill="#000" d="M0 0h8L4 5z"/></svg></button><input aria-label="${w.s} volume" value="0.01"><button aria-label="Increase volume"><svg><path fill="#000" d="M0 5h8L4 0z"/></svg></button></div></div>
</div></section>`).join('');

const pts=s=>s.split(' ').map(p=>p.split(',').map(Number));
const snap=v=>Math.round(v-.5)+.5;
function draw(w,i){
 const el=document.getElementById('plot'+i),W=el.clientWidth,H=el.clientHeight;
 const L=2.5,R=snap(W-71),B=snap(H-24),top=2.5,Y=v=>snap((v-w.y0)/3),X=v=>L+(v-w.x0)*.504;
 let o='',g='';
 const spl=w.split?w.split.map(Y):null,mainB=spl?spl[0]:B;
 for(let x=L+32;x<R;x+=32){g+=`M${x} ${top}V${mainB}`;if(spl)g+=`M${x} ${spl[1]}V${B}`}
 w.grid.forEach(([y])=>g+=`M${L} ${Y(y)}H${R}`);
 o+=`<path d="${g}" stroke="#708090" stroke-dasharray="4 3" fill="none"/>`;
 (w.lower||[]).forEach(([y,,c])=>o+=`<path d="M${L} ${Y(y)}H${R}" stroke="${c}" stroke-dasharray="3 3"/>`);
 o+=`<path d="M${L} ${Y(w.price[0])}H${R}" stroke="#778899"/>`;
 let wick='',up='',dn='',prev=w.s=='GBPUSD'?433:null;const hw=w.step==8?2:1;
 w.data.split(',').forEach((r,k)=>{const [h,l,c]=r.split(' ').map(Number),x=L+k*w.step,op=prev??c;prev=c;
  wick+=`M${x} ${Y(h)}V${Y(l)}`;
  if(w.kind=='bar')wick+=`M${x} ${Y(c)}h1.5M${x} ${Y(op)}h-1.5`;
  else{const a=Y(Math.min(op,c)),b=Math.max(Y(Math.max(op,c)),a+1),d=`M${x-hw} ${a}h${2*hw}V${b}h${-2*hw}z`;if(c>op)dn+=d;else up+=d}});
 o+=`<path d="${wick}" stroke="#0f0" fill="none"/><path d="${up}" stroke="#0f0" fill="#000"/><path d="${dn}" stroke="#0f0" fill="#fff"/>`;
 if(w.ma)o+=`<polyline points="${pts(w.ma).map(([x,y])=>X(x)+','+(y-w.y0)/3).join(' ')}" stroke="#f00" fill="none"/>`;
 if(w.s=='GBPUSD')o+=`<polyline points="${CCI.map((y,k)=>(L+8*k)+','+(y-w.y0)/3).join(' ')}" stroke="#20b2aa" fill="none"/>`;
 if(w.s=='USDJPY'){const p=pts(HIST);let d='',j=0;
  for(let k=1;k<174;k++){const x=w.x0+k*7.94;while(j<p.length-2&&p[j+1][0]<x)j++;
   const t=(x-p[j][0])/(p[j+1][0]-p[j][0]),y=p[j][1]+t*(p[j+1][1]-p[j][1]);d+=`M${L+4*k} ${Y(1132)}V${Y(y)}`}
  o+=`<path d="${d}" stroke="#c0c0c0" fill="none"/><polyline points="${pts(SIGNAL).map(([x,y])=>X(x)+','+(y-w.y0)/3).join(' ')}" stroke="#f00" stroke-dasharray="3 2" fill="none"/>`}
 let f=spl?`M${L} ${top}H${R}V${spl[0]}H${L}zM${L} ${spl[1]}H${R}V${B}H${L}z`:`M${L} ${top}H${R}V${B}H${L}z`;
 if(spl)f+=`M${R} ${spl[1]+1}h4M${R} ${B-1}h4`;
 const lab=(y,t)=>t?`<text x="${R+6}" y="${Y(y)+4}">${t}</text>`:'';let tx='';
 w.grid.concat(w.lower||[]).forEach(([y,t])=>{f+=`M${R} ${Y(y)}h5`;tx+=lab(y,t)});
 (w.ends||[]).forEach(([y,t])=>tx+=lab(y,t));
 w.dates.forEach((t,k)=>{const x=L+128*k;f+=`M${x} ${B}v5`;tx+=`<text x="${x-1}" y="${B+15}">${t}</text>`});
 if(w.note)tx+=`<text x="5" y="${spl[1]+15}">${w.note}</text>`;
 const py=Y(w.price[0]);
 tx+=`<rect x="${R+3}" y="${py-7}" width="54" height="14" fill="#778899"/><text x="${R+6}" y="${py+4}" fill="#000">${w.price[1]}</text>`;
 el.innerHTML=`<g shape-rendering="crispEdges">${o}<path d="${f}" stroke="#fff" fill="none"/></g>${tx}`;
}
const drawAll=()=>wins.forEach(draw);
drawAll();addEventListener('resize',drawAll);
</script>
<script src="https://cdn.jsdelivr.net/npm/bootstrap@5.3.0/dist/js/bootstrap.bundle.min.js"></script>
</body>
</html>
